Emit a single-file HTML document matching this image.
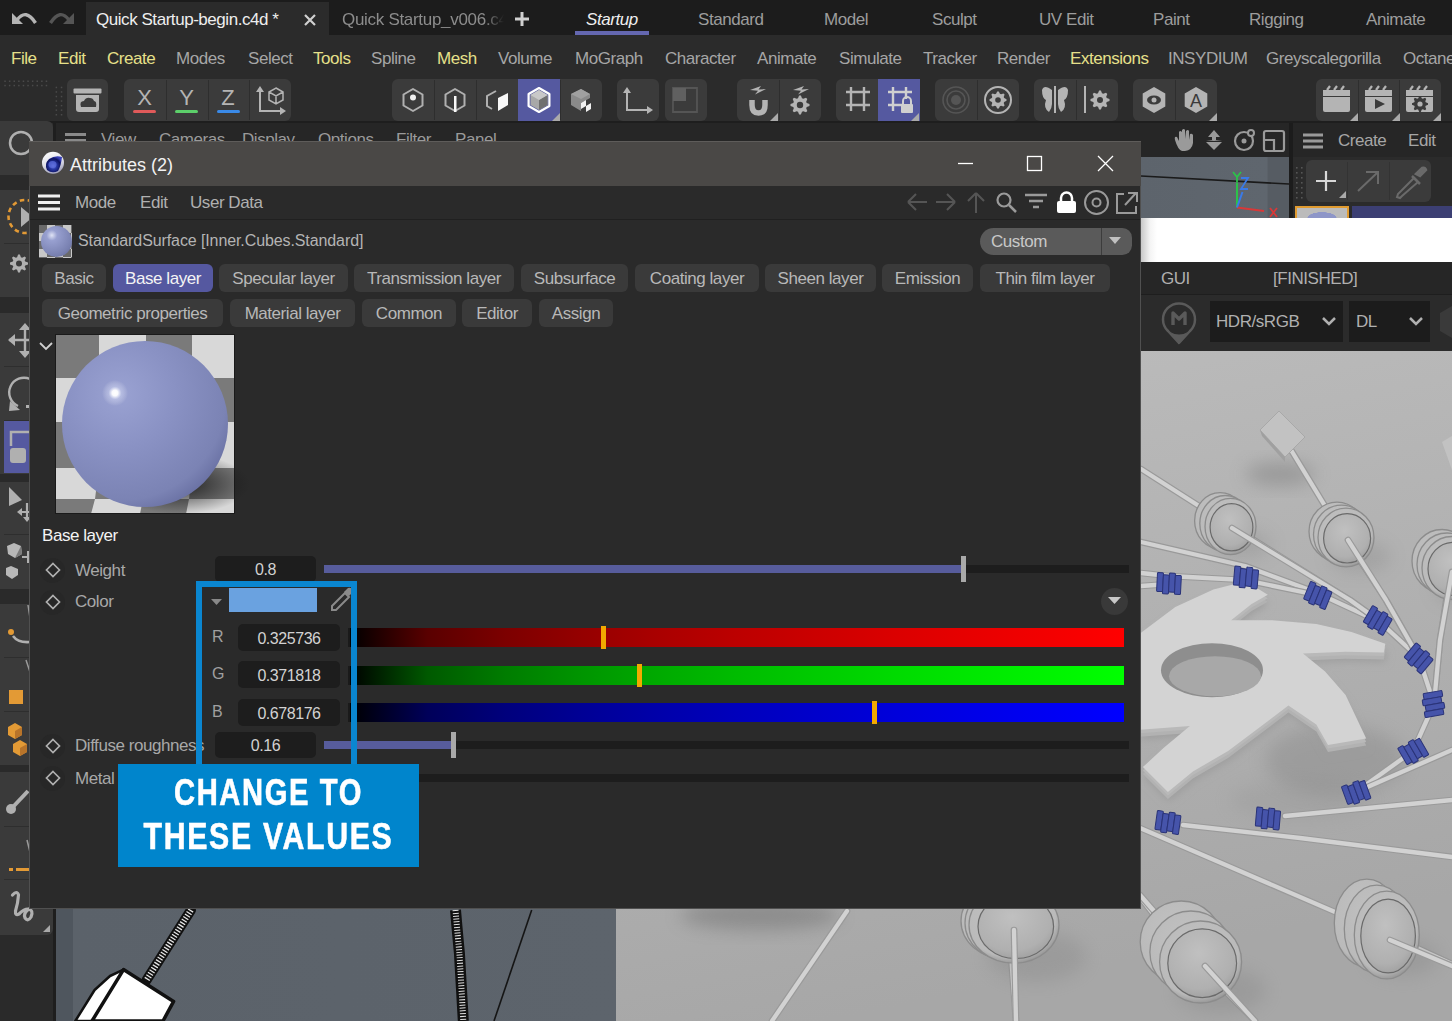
<!DOCTYPE html><html><head><meta charset="utf-8"><style>
html,body{margin:0;padding:0;}
body{width:1452px;height:1021px;overflow:hidden;position:relative;background:#232323;font-family:"Liberation Sans",sans-serif;}
.t{position:absolute;white-space:nowrap;line-height:1;letter-spacing:-0.45px;}
.b{position:absolute;}
svg{position:absolute;overflow:visible;}
</style></head><body>

<div class="b" style="left:0px;top:0px;width:1452px;height:35px;background:#1c1c1c;"></div>
<div class="b" style="left:86px;top:2px;width:243px;height:33px;background:#2b2b2b;"></div>
<svg style="left:0;top:0" width="100" height="35">
<path d="M12 13 L12 24 L23 24 Z" fill="#b4b4b4"/>
<path d="M17 20 Q26 8 35.5 23" stroke="#b4b4b4" stroke-width="3.4" fill="none"/>
<path d="M74 13 L74 24 L63 24 Z" fill="#555"/>
<path d="M69 20 Q60 8 50.5 23" stroke="#555" stroke-width="3.4" fill="none"/>
</svg>
<div class="t" style="left:96px;top:11px;font-size:17px;color:#eeeeee;">Quick Startup-begin.c4d *</div>
<svg style="left:300;top:10" width="20" height="20"><path d="M5 5 L15 15 M15 5 L5 15" stroke="#d0d0d0" stroke-width="2.2"/></svg>
<div class="t" style="left:342px;top:11px;font-size:17px;color:#8c8c8c;width:162px;overflow:hidden;letter-spacing:-0.3px;-webkit-mask-image:linear-gradient(90deg,#000 88%,transparent)">Quick Startup_v006.c4d</div>
<svg style="left:512;top:9" width="20" height="20"><path d="M10 3 L10 17 M3 10 L17 10" stroke="#d0d0d0" stroke-width="3"/></svg>
<div class="t" style="left:586px;top:11px;font-size:17px;color:#eeeeee;font-style:italic">Startup</div>
<div class="b" style="left:575px;top:31px;width:74px;height:4px;background:#6467b0;"></div>
<div class="t" style="left:698px;top:11px;font-size:17px;color:#9d9d9d;">Standard</div>
<div class="t" style="left:824px;top:11px;font-size:17px;color:#9d9d9d;">Model</div>
<div class="t" style="left:932px;top:11px;font-size:17px;color:#9d9d9d;">Sculpt</div>
<div class="t" style="left:1039px;top:11px;font-size:17px;color:#9d9d9d;">UV Edit</div>
<div class="t" style="left:1153px;top:11px;font-size:17px;color:#9d9d9d;">Paint</div>
<div class="t" style="left:1249px;top:11px;font-size:17px;color:#9d9d9d;">Rigging</div>
<div class="t" style="left:1366px;top:11px;font-size:17px;color:#9d9d9d;">Animate</div>
<div class="b" style="left:0px;top:35px;width:1452px;height:43px;background:#2b2b2b;"></div>
<div class="t" style="left:11px;top:50px;font-size:17px;color:#e6e08a;">File</div>
<div class="t" style="left:58px;top:50px;font-size:17px;color:#e6e08a;">Edit</div>
<div class="t" style="left:107px;top:50px;font-size:17px;color:#e6e08a;">Create</div>
<div class="t" style="left:176px;top:50px;font-size:17px;color:#a6a6a6;">Modes</div>
<div class="t" style="left:248px;top:50px;font-size:17px;color:#a6a6a6;">Select</div>
<div class="t" style="left:313px;top:50px;font-size:17px;color:#e6e08a;">Tools</div>
<div class="t" style="left:371px;top:50px;font-size:17px;color:#a6a6a6;">Spline</div>
<div class="t" style="left:437px;top:50px;font-size:17px;color:#e6e08a;">Mesh</div>
<div class="t" style="left:498px;top:50px;font-size:17px;color:#a6a6a6;">Volume</div>
<div class="t" style="left:575px;top:50px;font-size:17px;color:#a6a6a6;">MoGraph</div>
<div class="t" style="left:665px;top:50px;font-size:17px;color:#a6a6a6;">Character</div>
<div class="t" style="left:757px;top:50px;font-size:17px;color:#a6a6a6;">Animate</div>
<div class="t" style="left:839px;top:50px;font-size:17px;color:#a6a6a6;">Simulate</div>
<div class="t" style="left:923px;top:50px;font-size:17px;color:#a6a6a6;">Tracker</div>
<div class="t" style="left:997px;top:50px;font-size:17px;color:#a6a6a6;">Render</div>
<div class="t" style="left:1070px;top:50px;font-size:17px;color:#e6e08a;">Extensions</div>
<div class="t" style="left:1168px;top:50px;font-size:17px;color:#a6a6a6;">INSYDIUM</div>
<div class="t" style="left:1266px;top:50px;font-size:17px;color:#a6a6a6;">Greyscalegorilla</div>
<div class="t" style="left:1403px;top:50px;font-size:17px;color:#a6a6a6;">Octane</div>
<div class="b" style="left:0px;top:78px;width:1452px;height:44px;background:#2b2b2b;"></div>
<svg style="left:0;top:78px" width="70" height="44"><rect x="4.3" y="2.5" width="1.5" height="1.5" fill="#4a4a4a"/><rect x="4.3" y="6.8" width="1.5" height="1.5" fill="#4a4a4a"/><rect x="8.9" y="2.5" width="1.5" height="1.5" fill="#4a4a4a"/><rect x="8.9" y="6.8" width="1.5" height="1.5" fill="#4a4a4a"/><rect x="13.5" y="2.5" width="1.5" height="1.5" fill="#4a4a4a"/><rect x="13.5" y="6.8" width="1.5" height="1.5" fill="#4a4a4a"/><rect x="18.1" y="2.5" width="1.5" height="1.5" fill="#4a4a4a"/><rect x="18.1" y="6.8" width="1.5" height="1.5" fill="#4a4a4a"/><rect x="22.7" y="2.5" width="1.5" height="1.5" fill="#4a4a4a"/><rect x="22.7" y="6.8" width="1.5" height="1.5" fill="#4a4a4a"/><rect x="27.3" y="2.5" width="1.5" height="1.5" fill="#4a4a4a"/><rect x="27.3" y="6.8" width="1.5" height="1.5" fill="#4a4a4a"/><rect x="31.9" y="2.5" width="1.5" height="1.5" fill="#4a4a4a"/><rect x="31.9" y="6.8" width="1.5" height="1.5" fill="#4a4a4a"/><rect x="36.5" y="2.5" width="1.5" height="1.5" fill="#4a4a4a"/><rect x="36.5" y="6.8" width="1.5" height="1.5" fill="#4a4a4a"/><rect x="41.1" y="2.5" width="1.5" height="1.5" fill="#4a4a4a"/><rect x="41.1" y="6.8" width="1.5" height="1.5" fill="#4a4a4a"/><rect x="45.7" y="2.5" width="1.5" height="1.5" fill="#4a4a4a"/><rect x="45.7" y="6.8" width="1.5" height="1.5" fill="#4a4a4a"/><rect x="55.6" y="8.7" width="1.5" height="1.5" fill="#4a4a4a"/><rect x="60.8" y="8.7" width="1.5" height="1.5" fill="#4a4a4a"/><rect x="55.6" y="13.2" width="1.5" height="1.5" fill="#4a4a4a"/><rect x="60.8" y="13.2" width="1.5" height="1.5" fill="#4a4a4a"/><rect x="55.6" y="17.8" width="1.5" height="1.5" fill="#4a4a4a"/><rect x="60.8" y="17.8" width="1.5" height="1.5" fill="#4a4a4a"/><rect x="55.6" y="22.3" width="1.5" height="1.5" fill="#4a4a4a"/><rect x="60.8" y="22.3" width="1.5" height="1.5" fill="#4a4a4a"/><rect x="55.6" y="26.9" width="1.5" height="1.5" fill="#4a4a4a"/><rect x="60.8" y="26.9" width="1.5" height="1.5" fill="#4a4a4a"/><rect x="55.6" y="31.4" width="1.5" height="1.5" fill="#4a4a4a"/><rect x="60.8" y="31.4" width="1.5" height="1.5" fill="#4a4a4a"/><rect x="55.6" y="36.0" width="1.5" height="1.5" fill="#4a4a4a"/><rect x="60.8" y="36.0" width="1.5" height="1.5" fill="#4a4a4a"/></svg>
<div class="b" style="left:67px;top:79px;width:41px;height:42px;background:#3b3b3b;border-radius:6px"></div>
<div class="b" style="left:124px;top:79px;width:167px;height:42px;background:#3b3b3b;border-radius:6px"></div><div class="b" style="left:166px;top:80px;width:1px;height:40px;background:#2e2e2e;"></div><div class="b" style="left:208px;top:80px;width:1px;height:40px;background:#2e2e2e;"></div><div class="b" style="left:249px;top:80px;width:1px;height:40px;background:#2e2e2e;"></div>
<div class="b" style="left:392px;top:79px;width:210px;height:42px;background:#3b3b3b;border-radius:6px"></div><div class="b" style="left:434px;top:80px;width:1px;height:40px;background:#2e2e2e;"></div><div class="b" style="left:476px;top:80px;width:1px;height:40px;background:#2e2e2e;"></div><div class="b" style="left:518px;top:80px;width:1px;height:40px;background:#2e2e2e;"></div><div class="b" style="left:560px;top:80px;width:1px;height:40px;background:#2e2e2e;"></div><div class="b" style="left:518px;top:79px;width:42px;height:42px;background:#5559a0;border-radius:0"></div>
<div class="b" style="left:617px;top:79px;width:42px;height:42px;background:#3b3b3b;border-radius:6px"></div>
<div class="b" style="left:665px;top:79px;width:42px;height:42px;background:#3b3b3b;border-radius:6px"></div>
<div class="b" style="left:737px;top:79px;width:84px;height:42px;background:#3b3b3b;border-radius:6px"></div><div class="b" style="left:779px;top:80px;width:1px;height:40px;background:#2e2e2e;"></div>
<div class="b" style="left:836px;top:79px;width:83px;height:42px;background:#3b3b3b;border-radius:6px"></div><div class="b" style="left:878px;top:80px;width:1px;height:40px;background:#2e2e2e;"></div><div class="b" style="left:878px;top:79px;width:42px;height:42px;background:#5559a0;border-radius:0"></div>
<div class="b" style="left:935px;top:79px;width:84px;height:42px;background:#3b3b3b;border-radius:6px"></div><div class="b" style="left:977px;top:80px;width:1px;height:40px;background:#2e2e2e;"></div>
<div class="b" style="left:1034px;top:79px;width:84px;height:42px;background:#3b3b3b;border-radius:6px"></div><div class="b" style="left:1076px;top:80px;width:1px;height:40px;background:#2e2e2e;"></div>
<div class="b" style="left:1133px;top:79px;width:84px;height:42px;background:#3b3b3b;border-radius:6px"></div><div class="b" style="left:1175px;top:80px;width:1px;height:40px;background:#2e2e2e;"></div>
<div class="b" style="left:1316px;top:79px;width:125px;height:42px;background:#3b3b3b;border-radius:6px"></div><div class="b" style="left:1358px;top:80px;width:1px;height:40px;background:#2e2e2e;"></div><div class="b" style="left:1399px;top:80px;width:1px;height:40px;background:#2e2e2e;"></div>
<div class="b" style="left:0px;top:121px;width:1452px;height:2px;background:#1e1e1e;"></div>
<svg style="left:0;top:0" width="1452" height="125"><rect x="73.5" y="88.5" width="28" height="5" rx="1" fill="#b4b4b4"/><path d="M76 95 H99 V109 Q99 112 96 112 H79 Q76 112 76 109 Z" fill="#b4b4b4"/><path d="M81 107 Q79 101 84 101 Q86 97 90 98 Q93 98 94 101 Q97 101 96 107 Z" fill="#3b3b3b"/><text x="144.5" y="105" font-family="Liberation Sans" font-size="22" fill="#b4b4b4" text-anchor="middle">X</text><rect x="133" y="110" width="23" height="3" rx="1.5" fill="#e05a5a"/><text x="186.5" y="105" font-family="Liberation Sans" font-size="22" fill="#b4b4b4" text-anchor="middle">Y</text><rect x="175" y="110" width="23" height="3" rx="1.5" fill="#5ccf6a"/><text x="228" y="105" font-family="Liberation Sans" font-size="22" fill="#b4b4b4" text-anchor="middle">Z</text><rect x="217" y="110" width="23" height="3" rx="1.5" fill="#3a8ae8"/><path d="M260 90 V111 H282" stroke="#b4b4b4" stroke-width="2" fill="none"/><path d="M256 92 L260 86 L264 92 Z M280 107 L286 111 L280 115 Z" fill="#b4b4b4"/><path d="M276 88 L283 92 L283 100 L276 104 L269 100 L269 92 Z M269 92 L276 96 L283 92 M276 96 V104" stroke="#b4b4b4" stroke-width="1.5" fill="none"/><path d="M413.0 111.0 L403.5 105.5 L403.5 94.5 L413.0 89.0 L422.5 94.5 L422.5 105.5 Z" stroke="#b0b0b0" stroke-width="2" fill="none" stroke-linejoin="round"/><circle cx="413" cy="97.5" r="3" fill="#f0f0f0"/><path d="M455.0 111.0 L445.5 105.5 L445.5 94.5 L455.0 89.0 L464.5 94.5 L464.5 105.5 Z" stroke="#b0b0b0" stroke-width="2" fill="none" stroke-linejoin="round"/><rect x="454" y="96" width="2.5" height="16" fill="#f8f8f8"/><path d="M496 91 L487 96 V106 L492 109" stroke="#b0b0b0" stroke-width="2" fill="none"/><path d="M498 98 L508 93 V105 L498 111 Z" fill="#f8f8f8"/><path d="M539.0 112.0 L528.6 106.0 L528.6 94.0 L539.0 88.0 L549.4 94.0 L549.4 106.0 Z" stroke="#ffffff" stroke-width="2.2" fill="none" stroke-linejoin="round"/><path d="M539 90 L547.5 95 V105 L539 110 L530.5 105 V95 Z" fill="#a8a8a8"/><path d="M539 100 L547.5 95 V105 L539 110 Z" fill="#707070"/><path d="M539 100 L530.5 95 L539 90 L547.5 95 Z" fill="#c8c8c8"/><path d="M560 121 L552 121 L560 113 Z" fill="#aaaaaa"/><path d="M581 89 L590 94 V98 L581 103 V111 L571 105 V94 Z" fill="#8a8a8a"/><path d="M581 89 L590 94 L581 99 L571 94 Z" fill="#a0a0a0"/><path d="M581 103 L586 100 V106 L581 109 Z M586 106 L591 103 V109 L586 112 Z" fill="#f0f0f0"/><path d="M627 90 V110 H650" stroke="#b4b4b4" stroke-width="2" fill="none"/><path d="M623 93 L627 87 L631 93 Z M647 106 L653 110 L647 114 Z" fill="#b4b4b4"/><path d="M673 88 H697 V112 H673 Z" stroke="#555" stroke-width="1.8" fill="none"/><rect x="673" y="88" width="13" height="13" fill="#606060"/><path d="M752 96 V105 Q752 113 758.5 113 Q765 113 765 105 V96" stroke="#b4b4b4" stroke-width="5.5" fill="none"/><rect x="749" y="96" width="6" height="4" fill="#3b3b3b"/><rect x="762" y="96" width="6" height="4" fill="#3b3b3b"/><path d="M750 90 L761 86 L758.5 89.5 L766 89 L755 94.5 L758 90.8 Z" fill="#b4b4b4"/><path d="M778 121 L770 121 L778 113 Z" fill="#aaa"/><path d="M809.5 104.1 L809.5 105.9 L806.7 107.0 L806.2 108.3 L807.3 111.0 L806.0 112.3 L803.3 111.2 L802.0 111.7 L800.9 114.5 L799.1 114.5 L798.0 111.7 L796.7 111.2 L794.0 112.3 L792.7 111.0 L793.8 108.3 L793.3 107.0 L790.5 105.9 L790.5 104.1 L793.3 103.0 L793.8 101.7 L792.7 99.0 L794.0 97.7 L796.7 98.8 L798.0 98.3 L799.1 95.5 L800.9 95.5 L802.0 98.3 L803.3 98.8 L806.0 97.7 L807.3 99.0 L806.2 101.7 L806.7 103.0 Z" fill="#b4b4b4"/><circle cx="800" cy="105" r="3.2" fill="#3b3b3b"/><path d="M793 90 L804 86 L801.5 89.5 L809 89 L798 94.5 L801 90.8 Z" fill="#b4b4b4"/><path d="M846 92 H870 M846 105 H870 M851 87 V111 M864 87 V111" stroke="#b4b4b4" stroke-width="2.4"/><path d="M888 92 H912 M888 105 H902 M893 87 V111 M906 87 V99" stroke="#d0d0d0" stroke-width="2.4"/><rect x="901" y="104" width="12" height="9" rx="1" fill="#d0d0d0"/><path d="M903 104 V101 A4 4 0 0 1 911 101 V104" stroke="#d0d0d0" stroke-width="2" fill="none"/><path d="M919 121 L911 121 L919 113 Z" fill="#aaa"/><circle cx="956" cy="100" r="13" stroke="#555" stroke-width="1.6" fill="none"/><circle cx="956" cy="100" r="9" stroke="#555" stroke-width="1.6" fill="none"/><circle cx="956" cy="100" r="5" fill="#555"/><circle cx="998" cy="100" r="13" stroke="#b4b4b4" stroke-width="2" fill="none"/><path d="M1006.5 99.2 L1006.5 100.8 L1004.2 101.9 L1003.7 103.1 L1004.6 105.4 L1003.4 106.6 L1001.1 105.7 L999.9 106.2 L998.8 108.5 L997.2 108.5 L996.1 106.2 L994.9 105.7 L992.6 106.6 L991.4 105.4 L992.3 103.1 L991.8 101.9 L989.5 100.8 L989.5 99.2 L991.8 98.1 L992.3 96.9 L991.4 94.6 L992.6 93.4 L994.9 94.3 L996.1 93.8 L997.2 91.5 L998.8 91.5 L999.9 93.8 L1001.1 94.3 L1003.4 93.4 L1004.6 94.6 L1003.7 96.9 L1004.2 98.1 Z" fill="#b4b4b4"/><circle cx="998" cy="100" r="2.8" fill="#3b3b3b"/><rect x="1054" y="86" width="2" height="27" fill="#b4b4b4"/><path d="M1052 90 Q1044 84 1042 90 Q1042 98 1046 100 Q1043 108 1049 112 Q1052 108 1052 104 Z" fill="#b4b4b4"/><path d="M1058 90 Q1066 84 1068 90 Q1068 98 1064 100 Q1067 108 1061 112 Q1058 108 1058 104 Z" fill="#b4b4b4"/><rect x="1084" y="86" width="2" height="27" fill="#b4b4b4"/><path d="M1109.5 99.1 L1109.5 100.9 L1106.7 102.0 L1106.2 103.3 L1107.3 106.0 L1106.0 107.3 L1103.3 106.2 L1102.0 106.7 L1100.9 109.5 L1099.1 109.5 L1098.0 106.7 L1096.7 106.2 L1094.0 107.3 L1092.7 106.0 L1093.8 103.3 L1093.3 102.0 L1090.5 100.9 L1090.5 99.1 L1093.3 98.0 L1093.8 96.7 L1092.7 94.0 L1094.0 92.7 L1096.7 93.8 L1098.0 93.3 L1099.1 90.5 L1100.9 90.5 L1102.0 93.3 L1103.3 93.8 L1106.0 92.7 L1107.3 94.0 L1106.2 96.7 L1106.7 98.0 Z" fill="#b4b4b4"/><circle cx="1100" cy="100" r="3" fill="#3b3b3b"/><path d="M1154.0 113.0 L1142.7 106.5 L1142.7 93.5 L1154.0 87.0 L1165.3 93.5 L1165.3 106.5 Z" stroke="none" stroke-width="0" fill="#b4b4b4" stroke-linejoin="round"/><ellipse cx="1154" cy="100" rx="7" ry="4.5" fill="#3b3b3b"/><circle cx="1154" cy="100" r="2.5" fill="#b4b4b4"/><path d="M1196.0 113.0 L1184.7 106.5 L1184.7 93.5 L1196.0 87.0 L1207.3 93.5 L1207.3 106.5 Z" stroke="none" stroke-width="0" fill="#b4b4b4" stroke-linejoin="round"/><text x="1196" y="107" font-family="Liberation Sans" font-size="18" fill="#3b3b3b" text-anchor="middle">A</text><path d="M1217 121 L1209 121 L1217 113 Z" fill="#aaa"/><path d="M1323 90 H1350 V96 H1323 Z" fill="#b4b4b4"/><path d="M1327 90 L1330 86 M1334 90 L1337 86 M1341 90 L1344 86" stroke="#b4b4b4" stroke-width="2.2"/><path d="M1323 97 H1350 V110 Q1350 112 1348 112 H1325 Q1323 112 1323 110 Z" fill="#b4b4b4"/><path d="M1358 121 L1350 121 L1358 113 Z" fill="#aaa"/><path d="M1365 90 H1392 V96 H1365 Z" fill="#b4b4b4"/><path d="M1369 90 L1372 86 M1376 90 L1379 86 M1383 90 L1386 86" stroke="#b4b4b4" stroke-width="2.2"/><path d="M1365 97 H1392 V110 Q1392 112 1390 112 H1367 Q1365 112 1365 110 Z" fill="#b4b4b4"/><path d="M1400 121 L1392 121 L1400 113 Z" fill="#aaa"/><path d="M1406 90 H1433 V96 H1406 Z" fill="#b4b4b4"/><path d="M1410 90 L1413 86 M1417 90 L1420 86 M1424 90 L1427 86" stroke="#b4b4b4" stroke-width="2.2"/><path d="M1406 97 H1433 V110 Q1433 112 1431 112 H1408 Q1406 112 1406 110 Z" fill="#b4b4b4"/><path d="M1441 121 L1433 121 L1441 113 Z" fill="#aaa"/><path d="M1375 99 L1385 104 L1375 109 Z" fill="#3b3b3b"/><path d="M1428.0 103.2 L1428.0 104.8 L1425.7 105.7 L1425.3 106.8 L1426.2 109.1 L1425.1 110.2 L1422.8 109.3 L1421.7 109.7 L1420.8 112.0 L1419.2 112.0 L1418.3 109.7 L1417.2 109.3 L1414.9 110.2 L1413.8 109.1 L1414.7 106.8 L1414.3 105.7 L1412.0 104.8 L1412.0 103.2 L1414.3 102.3 L1414.7 101.2 L1413.8 98.9 L1414.9 97.8 L1417.2 98.7 L1418.3 98.3 L1419.2 96.0 L1420.8 96.0 L1421.7 98.3 L1422.8 98.7 L1425.1 97.8 L1426.2 98.9 L1425.3 101.2 L1425.7 102.3 Z" fill="#3b3b3b"/><circle cx="1420" cy="104" r="2.6" fill="#b4b4b4"/></svg>
<div class="b" style="left:0px;top:123px;width:56px;height:900px;background:#2a2a2a;"></div>
<div class="b" style="left:53px;top:121px;width:3px;height:900px;background:#1e1e1e;"></div>
<div class="b" style="left:0px;top:121px;width:53px;height:54px;background:#3a3a3a;border-radius:0 6px 6px 0"></div>
<div class="b" style="left:0px;top:190px;width:53px;height:107px;background:#3a3a3a;border-radius:0 6px 6px 0"></div>
<div class="b" style="left:4px;top:243px;width:49px;height:1px;background:#2e2e2e;"></div>
<div class="b" style="left:0px;top:313px;width:53px;height:161px;background:#3a3a3a;border-radius:0 6px 6px 0"></div>
<div class="b" style="left:4px;top:366px;width:49px;height:1px;background:#2e2e2e;"></div>
<div class="b" style="left:4px;top:420px;width:49px;height:1px;background:#2e2e2e;"></div>
<div class="b" style="left:0px;top:482px;width:53px;height:107px;background:#3a3a3a;border-radius:0 6px 6px 0"></div>
<div class="b" style="left:4px;top:534px;width:49px;height:1px;background:#2e2e2e;"></div>
<div class="b" style="left:0px;top:604px;width:53px;height:161px;background:#3a3a3a;border-radius:0 6px 6px 0"></div>
<div class="b" style="left:4px;top:657px;width:49px;height:1px;background:#2e2e2e;"></div>
<div class="b" style="left:4px;top:711px;width:49px;height:1px;background:#2e2e2e;"></div>
<div class="b" style="left:0px;top:772px;width:53px;height:163px;background:#3a3a3a;border-radius:0 6px 6px 0"></div>
<div class="b" style="left:4px;top:826px;width:49px;height:1px;background:#2e2e2e;"></div>
<div class="b" style="left:4px;top:879px;width:49px;height:1px;background:#2e2e2e;"></div>
<div class="b" style="left:4px;top:421px;width:49px;height:52px;background:#5559a0;"></div>
<svg style="left:0;top:0" width="56" height="1021"><circle cx="21" cy="143" r="11" stroke="#b0b0b0" stroke-width="2.5" fill="none"/><circle cx="25" cy="216.5" r="16.5" stroke="#e39a35" stroke-width="2.6" fill="none" stroke-dasharray="4.5 3.5"/><path d="M21 207 L33 217 L21 227 Z" fill="#b0b0b0"/><path d="M28.0 262.6 L28.0 264.4 L25.2 265.4 L24.7 266.6 L26.0 269.2 L24.7 270.5 L22.1 269.2 L20.9 269.7 L19.9 272.5 L18.1 272.5 L17.1 269.7 L15.9 269.2 L13.3 270.5 L12.0 269.2 L13.3 266.6 L12.8 265.4 L10.0 264.4 L10.0 262.6 L12.8 261.6 L13.3 260.4 L12.0 257.8 L13.3 256.5 L15.9 257.8 L17.1 257.3 L18.1 254.5 L19.9 254.5 L20.9 257.3 L22.1 257.8 L24.7 256.5 L26.0 257.8 L24.7 260.4 L25.2 261.6 Z" fill="#b0b0b0"/><circle cx="19" cy="263.5" r="3" fill="#3a3a3a"/><path d="M9 340 H40 M25 325 V356" stroke="#b0b0b0" stroke-width="2.4"/><path d="M8 340 L15 334 V346 Z M25 323 L19 330 H31 Z M25 358 L19 351 H31 Z" fill="#b0b0b0"/><path d="M30 379 A14 14 0 1 0 18 406" stroke="#b0b0b0" stroke-width="2.4" fill="none"/><path d="M10 401 L20 410 L9 411 Z" fill="#b0b0b0"/><rect x="26" y="405" width="4" height="3" fill="#b0b0b0"/><path d="M11 446 V432 H30" stroke="#b0b0b0" stroke-width="2.5" fill="none"/><rect x="10" y="448" width="16" height="15" rx="3" fill="#b0b0b0"/><path d="M9 487 L22 500 L9 506 Z" fill="#b0b0b0"/><path d="M19 512 H34 M27 503 V520" stroke="#b0b0b0" stroke-width="2.2"/><path d="M17 512 L22 508 V516 Z M27 522 L23 517 H31 Z" fill="#b0b0b0"/><path d="M14 543 L21 546 L22 554 L15 558 L8 554 L7 546 Z" fill="#b8b8b8"/><path d="M15 558 L22 554 L21 546 Z" fill="#7a7a7a"/><path d="M11 566 L18 569 L18 575 L12 579 L6 575 L6 568 Z" fill="#b8b8b8"/><path d="M22 557 H34 M28 551 V563" stroke="#b0b0b0" stroke-width="2"/><path d="M13 636 Q18 643 30 642" stroke="#b0b0b0" stroke-width="2.5" fill="none"/><circle cx="11" cy="632" r="3" fill="#e39a35"/><path d="M28 605 L30 618" stroke="#9a9a9a" stroke-width="1.5"/><rect x="9" y="690" width="14" height="14" fill="#e39a35"/><path d="M26 660 L30 672" stroke="#9a9a9a" stroke-width="1.5"/><path d="M8 727 L15 723 L22 727 V735 L15 739 L8 735 Z" fill="#e39a35"/><path d="M15 731 V739 L22 735 V727 Z" fill="#b8742a"/><path d="M13 744 L20 740 L27 744 V752 L20 756 L13 752 Z" fill="#e39a35"/><path d="M20 748 V756 L27 752 V744 Z" fill="#b8742a"/><path d="M12 808 L28 791" stroke="#b0b0b0" stroke-width="4"/><circle cx="11" cy="809" r="5" fill="#b0b0b0"/><rect x="9" y="868" width="4" height="3" fill="#e39a35"/><rect x="16" y="868" width="14" height="3" fill="#e39a35"/><path d="M27 840 L30 852" stroke="#9a9a9a" stroke-width="1.5"/><path d="M12.5 895 Q17 890 18.5 895 Q18 903 15.5 911 Q15 916 19 914 Q24 909 28 909 Q34 910 31 917 Q28 922 25 918 Q23 913 29 909" stroke="#b0b0b0" stroke-width="3.2" fill="none" stroke-linecap="round"/><path d="M50 932 L43 932 L50 925 Z" fill="#a8a8a8"/></svg>
<div class="b" style="left:56px;top:123px;width:1233px;height:34px;background:#262626;"></div>
<div class="b" style="left:1293px;top:123px;width:159px;height:34px;background:#262626;"></div>
<div class="b" style="left:1289px;top:123px;width:4px;height:95px;background:#1c1c1c;"></div>
<svg style="left:64px;top:131px" width="24" height="18"><path d="M1 3.5 H22 M1 9.5 H22 M1 15.5 H22" stroke="#8a8a8a" stroke-width="3"/></svg>
<div class="t" style="left:101px;top:131px;font-size:17px;color:#9a9a9a;">View</div>
<div class="t" style="left:159px;top:131px;font-size:17px;color:#9a9a9a;">Cameras</div>
<div class="t" style="left:242px;top:131px;font-size:17px;color:#9a9a9a;">Display</div>
<div class="t" style="left:318px;top:131px;font-size:17px;color:#9a9a9a;">Options</div>
<div class="t" style="left:396px;top:131px;font-size:17px;color:#9a9a9a;">Filter</div>
<div class="t" style="left:455px;top:131px;font-size:17px;color:#9a9a9a;">Panel</div>
<svg style="left:1170;top:128" width="120" height="26">
<path d="M5 12 Q4 8 7 9 L9 13 L9 4 Q10 2 12 4 L12 11 L12 2 Q14 0 15 2 L15 11 L16 3 Q18 1 19 3 L19 12 L20 6 Q22 5 23 7 L23 15 Q22 22 15 23 L12 23 Q8 22 5 12 Z" fill="#9a9a9a"/>
<path d="M44 2 L38 9 L42 9 L42 12 L36 12 L44 13 L52 12 L46 12 L46 9 L50 9 Z M36 14 L44 22 L52 14 Z" fill="#9a9a9a"/>
<circle cx="74" cy="13" r="9" stroke="#9a9a9a" stroke-width="2.2" fill="none"/><circle cx="74" cy="13" r="2.5" fill="#9a9a9a"/><circle cx="81" cy="5" r="3" fill="#262626" stroke="#9a9a9a" stroke-width="2"/>
<rect x="94" y="3" width="20" height="20" rx="2" stroke="#9a9a9a" stroke-width="2.2" fill="none"/><path d="M94 12 H104 V23" stroke="#9a9a9a" stroke-width="2.2" fill="none"/>
</svg>
<svg style="left:1302;top:133" width="22" height="16"><path d="M1 2 H21 M1 8 H21 M1 14 H21" stroke="#9a9a9a" stroke-width="3"/></svg>
<div class="t" style="left:1338px;top:132px;font-size:17px;color:#a6a6a6;">Create</div>
<div class="t" style="left:1408px;top:132px;font-size:17px;color:#a6a6a6;">Edit</div>
<div class="b" style="left:1141px;top:157px;width:148px;height:61px;background:linear-gradient(90deg,#5d646c 0%,#5f666e 85%,#565c63 86%,#565c63 100%);"></div>
<svg style="left:1141;top:157" width="148" height="61">
<path d="M0 19 L148 27" stroke="#1a1a1a" stroke-width="1.6"/>
<path d="M96 25.5 V50.5" stroke="#2cc24a" stroke-width="2"/>
<path d="M92 15 L96 20 L100 15 M96 20 V25" stroke="#2cc24a" stroke-width="1.8" fill="none"/>
<path d="M96 50.5 L123 54" stroke="#d83838" stroke-width="2"/>
<path d="M129 51 L136 60 M136 51 L129 60" stroke="#d83838" stroke-width="1.8"/>
<path d="M96 50.5 L101.5 35" stroke="#3a7ae8" stroke-width="2"/>
<path d="M100 21 H107 L100 32 H107" stroke="#3a7ae8" stroke-width="1.8" fill="none"/>
</svg>
<div class="b" style="left:1293px;top:157px;width:159px;height:48px;background:#2b2b2b;"></div>
<div class="b" style="left:1306px;top:160px;width:125px;height:42px;background:#3b3b3b;border-radius:6px"></div>
<div class="b" style="left:1347px;top:162px;width:1px;height:38px;background:#333;"></div>
<div class="b" style="left:1389px;top:162px;width:1px;height:38px;background:#333;"></div>
<svg style="left:1306;top:160" width="125" height="42">
<path d="M20 11 V31 M10 21 H30" stroke="#d8d8d8" stroke-width="2.2"/>
<path d="M33 38 L40 31 L40 38 Z" fill="#aaa"/>
<path d="M52 31 L72 12 M60 12 H72 V24" stroke="#6a6a6a" stroke-width="2" fill="none"/>
<path d="M96 36 L94 38 L91 37 L92 34 L108 18 L112 22 Z" stroke="#6a6a6a" stroke-width="2" fill="none"/><path d="M106 16 L114 24 M110 14 L116 8 Q119 7 120 10 L114 16 Z" stroke="#6a6a6a" stroke-width="2.5" fill="#6a6a6a"/>
</svg>
<div class="b" style="left:1293px;top:205px;width:159px;height:13px;background:#2b2b2b;"></div>
<svg style="left:1293px;top:160px" width="12" height="40"><rect x="3" y="7" width="1.6" height="1.6" fill="#555"/><rect x="3" y="12" width="1.6" height="1.6" fill="#555"/><rect x="3" y="17" width="1.6" height="1.6" fill="#555"/><rect x="3" y="22" width="1.6" height="1.6" fill="#555"/><rect x="3" y="27" width="1.6" height="1.6" fill="#555"/><rect x="3" y="32" width="1.6" height="1.6" fill="#555"/><rect x="3" y="37" width="1.6" height="1.6" fill="#555"/><rect x="8" y="7" width="1.6" height="1.6" fill="#555"/><rect x="8" y="12" width="1.6" height="1.6" fill="#555"/><rect x="8" y="17" width="1.6" height="1.6" fill="#555"/><rect x="8" y="22" width="1.6" height="1.6" fill="#555"/><rect x="8" y="27" width="1.6" height="1.6" fill="#555"/><rect x="8" y="32" width="1.6" height="1.6" fill="#555"/><rect x="8" y="37" width="1.6" height="1.6" fill="#555"/></svg>
<div class="b" style="left:1295px;top:206px;width:54px;height:12px;background:#e09b30;"></div>
<div class="b" style="left:1297px;top:208px;width:50px;height:10px;background:radial-gradient(ellipse at 50% 100%,#8e96c8 40%,#bbb 42%);"></div>
<div class="b" style="left:1352px;top:206px;width:100px;height:12px;background:#3c3f73;"></div>
<div class="b" style="left:1141px;top:218px;width:311px;height:44px;background:linear-gradient(90deg,#c8c8c8 0px,#f4f4f4 9px,#ffffff 16px);"></div>
<div class="b" style="left:1141px;top:262px;width:311px;height:33px;background:#262626;"></div>
<div class="t" style="left:1161px;top:270px;font-size:17px;color:#b0b0b0;">GUI</div>
<div class="t" style="left:1273px;top:270px;font-size:17px;color:#b0b0b0;">[FINISHED]</div>
<div class="b" style="left:1141px;top:295px;width:311px;height:56px;background:#2b2b2b;"></div>
<svg style="left:1160;top:301" width="40" height="44">
<path d="M19 42 L8 30 A16 16 0 1 1 30 30 Z" stroke="#5a5a5a" stroke-width="2.5" fill="none" stroke-linejoin="round"/>
<path d="M10 31 L19 42 L28 31 Q19 36 10 31 Z" fill="#5a5a5a"/>
<path d="M13 24 V12 L19 18 L25 12 V24" stroke="#5a5a5a" stroke-width="3.4" fill="none" stroke-linejoin="round"/>
</svg>
<div class="b" style="left:1210px;top:301px;width:133px;height:41px;background:#1c1c1c;"></div>
<div class="t" style="left:1216px;top:313px;font-size:17px;color:#b0b0b0;">HDR/sRGB</div>
<svg style="left:1320;top:315" width="18" height="12"><path d="M3 3 L9 9 L15 3" stroke="#b0b0b0" stroke-width="2.5" fill="none"/></svg>
<div class="b" style="left:1349px;top:301px;width:81px;height:41px;background:#1c1c1c;"></div>
<div class="t" style="left:1356px;top:313px;font-size:17px;color:#b0b0b0;">DL</div>
<svg style="left:1407;top:315" width="18" height="12"><path d="M3 3 L9 9 L15 3" stroke="#b0b0b0" stroke-width="2.5" fill="none"/></svg>
<svg style="left:1438px;top:304px" width="14" height="36"><path d="M14 2 L2 9 V27 L14 34 Z" fill="#3a3a3a"/></svg>
<div class="b" style="left:1141px;top:294px;width:311px;height:1px;background:#1e1e1e;"></div>
<div class="b" style="left:56px;top:909px;width:560px;height:112px;background:linear-gradient(90deg,#4f565e 0px,#4f565e 17px,#5b626a 17px,#5d646c 100%);"></div>
<svg style="left:56px;top:909px" width="560" height="112">
<path d="M135 1 L90.6 71" stroke="#111" stroke-width="10" stroke-linecap="round"/>
<path d="M135 1 L90.6 71" stroke="#e8e8e8" stroke-width="6" stroke-dasharray="1.3 1.7"/>
<path d="M399.5 1 Q402 30 403.4 44 Q405 70 407.3 112" stroke="#111" stroke-width="11" fill="none"/>
<path d="M399.5 1 Q402 30 403.4 44 Q405 70 407.3 112" stroke="#e0e0e0" stroke-width="6" stroke-dasharray="1 1.8" fill="none"/>
<path d="M67.5 60.6 L54 67 L38.6 81 L19.3 112 L60 112 Z" fill="#fff" stroke="#111" stroke-width="2.5" stroke-linejoin="round"/>
<path d="M67.5 60.6 L117.6 92.4 L107 112 L36 112 Z" fill="#fff" stroke="#111" stroke-width="3.5" stroke-linejoin="round"/>
<path d="M475.7 1 L438 112" stroke="#151515" stroke-width="1.6"/>
</svg>
<svg style="left:616px;top:351px" width="836" height="670"><defs>
<linearGradient id="bg" x1="0" y1="0" x2="0.25" y2="1"><stop offset="0" stop-color="#bdbdbd"/><stop offset="0.45" stop-color="#b3b3b3"/><stop offset="1" stop-color="#a7a7a7"/></linearGradient>
<radialGradient id="sph" cx="0.45" cy="0.35" r="0.75"><stop offset="0" stop-color="#c0c0c0"/><stop offset="0.7" stop-color="#b0b0b0"/><stop offset="1" stop-color="#999"/></radialGradient>
<radialGradient id="ring" cx="0.45" cy="0.4" r="0.6"><stop offset="0" stop-color="#c2c2c2"/><stop offset="0.85" stop-color="#bababa"/><stop offset="1" stop-color="#9a9a9a"/></radialGradient>
<filter id="blur" x="-50%" y="-50%" width="200%" height="200%"><feGaussianBlur stdDeviation="9"/></filter><filter id="blur2" x="-20%" y="-20%" width="140%" height="140%"><feGaussianBlur stdDeviation="4"/></filter>
</defs><rect x="0" y="0" width="836" height="670" fill="url(#bg)"/><ellipse cx="664" cy="123" rx="35" ry="12" fill="#666" opacity="0.35" filter="url(#blur)"/><ellipse cx="144" cy="564" rx="80" ry="15" fill="#555" opacity="0.35" filter="url(#blur)"/><ellipse cx="684" cy="449" rx="70" ry="20" fill="#888" opacity="0.2" filter="url(#blur)"/><ellipse cx="719" cy="409" rx="70" ry="35" fill="#707070" opacity="0.25" filter="url(#blur)"/><path d="M525.0 118.0 L583.0 155.0" stroke="#9a9a9a" stroke-width="6.7" fill="none" stroke-linecap="round" stroke-linejoin="round"/><path d="M525.0 118.0 L583.0 155.0" stroke="#d2d2d2" stroke-width="4.3" fill="none" stroke-linecap="round" stroke-linejoin="round"/><path d="M669.0 89.0 L709.0 155.0" stroke="#9a9a9a" stroke-width="6.7" fill="none" stroke-linecap="round" stroke-linejoin="round"/><path d="M669.0 89.0 L709.0 155.0" stroke="#d2d2d2" stroke-width="4.3" fill="none" stroke-linecap="round" stroke-linejoin="round"/><path d="M525.0 191.0 L629.0 215.0 L699.0 241.0 L764.0 271.0 L803.0 307.0 L818.0 353.0 L797.0 400.0 L740.0 441.0" stroke="#9a9a9a" stroke-width="6.7" fill="none" stroke-linecap="round" stroke-linejoin="round"/><path d="M525.0 191.0 L629.0 215.0 L699.0 241.0 L764.0 271.0 L803.0 307.0 L818.0 353.0 L797.0 400.0 L740.0 441.0" stroke="#d2d2d2" stroke-width="4.3" fill="none" stroke-linecap="round" stroke-linejoin="round"/><path d="M625.0 181.0 L734.0 249.0 L762.0 269.0" stroke="#9a9a9a" stroke-width="6.7" fill="none" stroke-linecap="round" stroke-linejoin="round"/><path d="M625.0 181.0 L734.0 249.0 L762.0 269.0" stroke="#d2d2d2" stroke-width="4.3" fill="none" stroke-linecap="round" stroke-linejoin="round"/><path d="M734.0 194.0 L770.0 249.0 L803.0 307.0" stroke="#9a9a9a" stroke-width="6.7" fill="none" stroke-linecap="round" stroke-linejoin="round"/><path d="M734.0 194.0 L770.0 249.0 L803.0 307.0" stroke="#d2d2d2" stroke-width="4.3" fill="none" stroke-linecap="round" stroke-linejoin="round"/><path d="M834.0 226.0 L824.0 289.0 L818.0 353.0" stroke="#9a9a9a" stroke-width="6.7" fill="none" stroke-linecap="round" stroke-linejoin="round"/><path d="M834.0 226.0 L824.0 289.0 L818.0 353.0" stroke="#d2d2d2" stroke-width="4.3" fill="none" stroke-linecap="round" stroke-linejoin="round"/><path d="M525.0 222.0 L553.0 225.0 L629.0 229.0 L701.0 244.0" stroke="#9a9a9a" stroke-width="6.7" fill="none" stroke-linecap="round" stroke-linejoin="round"/><path d="M525.0 222.0 L553.0 225.0 L629.0 229.0 L701.0 244.0" stroke="#d2d2d2" stroke-width="4.3" fill="none" stroke-linecap="round" stroke-linejoin="round"/><path d="M525.0 235.0 L553.0 233.0" stroke="#9a9a9a" stroke-width="6.7" fill="none" stroke-linecap="round" stroke-linejoin="round"/><path d="M525.0 235.0 L553.0 233.0" stroke="#d2d2d2" stroke-width="4.3" fill="none" stroke-linecap="round" stroke-linejoin="round"/><path d="M567.0 474.0 L684.0 487.0 L836.0 506.0" stroke="#9a9a9a" stroke-width="6.7" fill="none" stroke-linecap="round" stroke-linejoin="round"/><path d="M567.0 474.0 L684.0 487.0 L836.0 506.0" stroke="#d2d2d2" stroke-width="4.3" fill="none" stroke-linecap="round" stroke-linejoin="round"/><path d="M524.0 477.0 L719.0 561.0" stroke="#9a9a9a" stroke-width="6.7" fill="none" stroke-linecap="round" stroke-linejoin="round"/><path d="M524.0 477.0 L719.0 561.0" stroke="#d2d2d2" stroke-width="4.3" fill="none" stroke-linecap="round" stroke-linejoin="round"/><path d="M669.0 465.0 L836.0 449.0" stroke="#9a9a9a" stroke-width="6.7" fill="none" stroke-linecap="round" stroke-linejoin="round"/><path d="M669.0 465.0 L836.0 449.0" stroke="#d2d2d2" stroke-width="4.3" fill="none" stroke-linecap="round" stroke-linejoin="round"/><path d="M740.0 441.0 L836.0 399.0" stroke="#9a9a9a" stroke-width="6.7" fill="none" stroke-linecap="round" stroke-linejoin="round"/><path d="M740.0 441.0 L836.0 399.0" stroke="#d2d2d2" stroke-width="4.3" fill="none" stroke-linecap="round" stroke-linejoin="round"/><path d="M799.0 596.0 L836.0 613.0" stroke="#9a9a9a" stroke-width="6.7" fill="none" stroke-linecap="round" stroke-linejoin="round"/><path d="M799.0 596.0 L836.0 613.0" stroke="#d2d2d2" stroke-width="4.3" fill="none" stroke-linecap="round" stroke-linejoin="round"/><path d="M524.0 546.0 L541.0 568.0" stroke="#9a9a9a" stroke-width="6.7" fill="none" stroke-linecap="round" stroke-linejoin="round"/><path d="M524.0 546.0 L541.0 568.0" stroke="#d2d2d2" stroke-width="4.3" fill="none" stroke-linecap="round" stroke-linejoin="round"/><path d="M595.0 626.0 L639.0 670.0" stroke="#9a9a9a" stroke-width="6.7" fill="none" stroke-linecap="round" stroke-linejoin="round"/><path d="M595.0 626.0 L639.0 670.0" stroke="#d2d2d2" stroke-width="4.3" fill="none" stroke-linecap="round" stroke-linejoin="round"/><path d="M231.0 560.0 L156.0 670.0" stroke="#9a9a9a" stroke-width="6.7" fill="none" stroke-linecap="round" stroke-linejoin="round"/><path d="M231.0 560.0 L156.0 670.0" stroke="#d2d2d2" stroke-width="4.3" fill="none" stroke-linecap="round" stroke-linejoin="round"/><path d="M395.0 604.0 L400.0 670.0" stroke="#9a9a9a" stroke-width="6.7" fill="none" stroke-linecap="round" stroke-linejoin="round"/><path d="M395.0 604.0 L400.0 670.0" stroke="#d2d2d2" stroke-width="4.3" fill="none" stroke-linecap="round" stroke-linejoin="round"/><path d="M524.0 544.0 L544.0 567.0" stroke="#9a9a9a" stroke-width="6.7" fill="none" stroke-linecap="round" stroke-linejoin="round"/><path d="M524.0 544.0 L544.0 567.0" stroke="#d2d2d2" stroke-width="4.3" fill="none" stroke-linecap="round" stroke-linejoin="round"/><path d="M524.0 282.4 L559.3 256.0 L597.4 238.4 L629.8 230.2 L651.8 243.7 L635.6 253.1 L615.1 269.2 L656.2 269.2 L700.3 273.0 L735.5 281.0 L769.3 292.7 L767.8 301.5 L729.6 300.7 L687.0 302.4 L709.1 320.6 L729.6 344.1 L750.2 387.6 L712.0 394.1 L700.3 373.5 L672.4 354.4 L647.4 373.5 L612.1 400.0 L576.9 420.5 L551.9 441.1 L526.9 416.1 L547.5 397.0 L573.9 375.0 L524.0 378.8 Z" transform="translate(1 9)" fill="#9c9c9c" filter="url(#blur2)"/><path d="M524.0 282.4 L559.3 256.0 L597.4 238.4 L629.8 230.2 L651.8 243.7 L635.6 253.1 L615.1 269.2 L656.2 269.2 L700.3 273.0 L735.5 281.0 L769.3 292.7 L767.8 301.5 L729.6 300.7 L687.0 302.4 L709.1 320.6 L729.6 344.1 L750.2 387.6 L712.0 394.1 L700.3 373.5 L672.4 354.4 L647.4 373.5 L612.1 400.0 L576.9 420.5 L551.9 441.1 L526.9 416.1 L547.5 397.0 L573.9 375.0 L524.0 378.8 Z" transform="translate(0 7)" fill="#b2b2b2"/><path d="M524.0 282.4 L559.3 256.0 L597.4 238.4 L629.8 230.2 L651.8 243.7 L635.6 253.1 L615.1 269.2 L656.2 269.2 L700.3 273.0 L735.5 281.0 L769.3 292.7 L767.8 301.5 L729.6 300.7 L687.0 302.4 L709.1 320.6 L729.6 344.1 L750.2 387.6 L712.0 394.1 L700.3 373.5 L672.4 354.4 L647.4 373.5 L612.1 400.0 L576.9 420.5 L551.9 441.1 L526.9 416.1 L547.5 397.0 L573.9 375.0 L524.0 378.8 Z" transform="translate(0 3.5)" fill="#b9b9b9"/><path d="M524.0 282.4 L559.3 256.0 L597.4 238.4 L629.8 230.2 L651.8 243.7 L635.6 253.1 L615.1 269.2 L656.2 269.2 L700.3 273.0 L735.5 281.0 L769.3 292.7 L767.8 301.5 L729.6 300.7 L687.0 302.4 L709.1 320.6 L729.6 344.1 L750.2 387.6 L712.0 394.1 L700.3 373.5 L672.4 354.4 L647.4 373.5 L612.1 400.0 L576.9 420.5 L551.9 441.1 L526.9 416.1 L547.5 397.0 L573.9 375.0 L524.0 378.8 Z" fill="#d3d3d3"/><ellipse cx="596.0" cy="319.2" rx="51" ry="27" fill="#8e8e8e"/><ellipse cx="599.0" cy="325.2" rx="46" ry="20" fill="#a8a8a8"/><ellipse cx="627.2" cy="193.3" rx="28.1" ry="14.0" fill="#707070" opacity="0.22" filter="url(#blur)"/><ellipse cx="604.1" cy="169.7" rx="25.5" ry="28.1" fill="url(#ring)" stroke="#8c8c8c" stroke-width="1.3"/><ellipse cx="609.3" cy="172.6" rx="25.5" ry="28.1" fill="url(#ring)" stroke="#8c8c8c" stroke-width="1.3"/><ellipse cx="614.5" cy="175.5" rx="25.5" ry="28.1" fill="url(#ring)" stroke="#8c8c8c" stroke-width="1.3"/><ellipse cx="615.5" cy="176.3" rx="21.4" ry="23.6" fill="url(#sph)" stroke="#6a6a6a" stroke-width="1.2"/><ellipse cx="744.0" cy="206.1" rx="30.8" ry="15.4" fill="#707070" opacity="0.22" filter="url(#blur)"/><ellipse cx="721.0" cy="180.5" rx="28.0" ry="29.4" fill="url(#ring)" stroke="#8c8c8c" stroke-width="1.3"/><ellipse cx="725.5" cy="183.5" rx="28.0" ry="29.4" fill="url(#ring)" stroke="#8c8c8c" stroke-width="1.3"/><ellipse cx="730.0" cy="186.5" rx="28.0" ry="29.4" fill="url(#ring)" stroke="#8c8c8c" stroke-width="1.3"/><ellipse cx="731.1" cy="187.3" rx="23.5" ry="24.7" fill="url(#sph)" stroke="#6a6a6a" stroke-width="1.2"/><ellipse cx="851.0" cy="238.0" rx="33.0" ry="16.5" fill="#707070" opacity="0.22" filter="url(#blur)"/><ellipse cx="826.0" cy="210.0" rx="30.0" ry="31.5" fill="url(#ring)" stroke="#8c8c8c" stroke-width="1.3"/><ellipse cx="831.0" cy="213.5" rx="30.0" ry="31.5" fill="url(#ring)" stroke="#8c8c8c" stroke-width="1.3"/><ellipse cx="836.0" cy="217.0" rx="30.0" ry="31.5" fill="url(#ring)" stroke="#8c8c8c" stroke-width="1.3"/><ellipse cx="837.2" cy="217.9" rx="25.2" ry="26.5" fill="url(#sph)" stroke="#6a6a6a" stroke-width="1.2"/><ellipse cx="605.1" cy="639.7" rx="45.1" ry="22.6" fill="#707070" opacity="0.22" filter="url(#blur)"/><ellipse cx="565.2" cy="591.0" rx="41.0" ry="41.0" fill="url(#ring)" stroke="#8c8c8c" stroke-width="1.3"/><ellipse cx="574.9" cy="601.0" rx="41.0" ry="41.0" fill="url(#ring)" stroke="#8c8c8c" stroke-width="1.3"/><ellipse cx="584.6" cy="611.0" rx="41.0" ry="41.0" fill="url(#ring)" stroke="#8c8c8c" stroke-width="1.3"/><ellipse cx="586.2" cy="612.2" rx="34.4" ry="34.4" fill="url(#sph)" stroke="#6a6a6a" stroke-width="1.2"/><ellipse cx="787.0" cy="606.8" rx="35.8" ry="17.9" fill="#707070" opacity="0.22" filter="url(#blur)"/><ellipse cx="750.8" cy="572.0" rx="32.5" ry="43.9" fill="url(#ring)" stroke="#8c8c8c" stroke-width="1.3"/><ellipse cx="760.8" cy="578.0" rx="32.5" ry="43.9" fill="url(#ring)" stroke="#8c8c8c" stroke-width="1.3"/><ellipse cx="770.8" cy="584.0" rx="32.5" ry="43.9" fill="url(#ring)" stroke="#8c8c8c" stroke-width="1.3"/><ellipse cx="772.1" cy="585.0" rx="27.3" ry="36.9" fill="url(#sph)" stroke="#6a6a6a" stroke-width="1.2"/><ellipse cx="420.5" cy="605.5" rx="49.5" ry="24.8" fill="#707070" opacity="0.22" filter="url(#blur)"/><ellipse cx="390.0" cy="570.0" rx="45.0" ry="38.2" fill="url(#ring)" stroke="#8c8c8c" stroke-width="1.3"/><ellipse cx="394.0" cy="572.0" rx="45.0" ry="38.2" fill="url(#ring)" stroke="#8c8c8c" stroke-width="1.3"/><ellipse cx="398.0" cy="574.0" rx="45.0" ry="38.2" fill="url(#ring)" stroke="#8c8c8c" stroke-width="1.3"/><ellipse cx="399.8" cy="575.4" rx="37.8" ry="32.1" fill="url(#sph)" stroke="#6a6a6a" stroke-width="1.2"/><path d="M616.0 177.0 L734.0 249.0 L762.0 269.0" stroke="#9a9a9a" stroke-width="6.7" fill="none" stroke-linecap="round" stroke-linejoin="round"/><path d="M616.0 177.0 L734.0 249.0 L762.0 269.0" stroke="#d2d2d2" stroke-width="4.3" fill="none" stroke-linecap="round" stroke-linejoin="round"/><path d="M732.0 189.0 L770.0 249.0 L803.0 307.0" stroke="#9a9a9a" stroke-width="6.7" fill="none" stroke-linecap="round" stroke-linejoin="round"/><path d="M732.0 189.0 L770.0 249.0 L803.0 307.0" stroke="#d2d2d2" stroke-width="4.3" fill="none" stroke-linecap="round" stroke-linejoin="round"/><path d="M836.0 221.0 L824.0 289.0 L818.0 353.0" stroke="#9a9a9a" stroke-width="6.7" fill="none" stroke-linecap="round" stroke-linejoin="round"/><path d="M836.0 221.0 L824.0 289.0 L818.0 353.0" stroke="#d2d2d2" stroke-width="4.3" fill="none" stroke-linecap="round" stroke-linejoin="round"/><path d="M589.0 615.0 L639.0 670.0" stroke="#9a9a9a" stroke-width="6.7" fill="none" stroke-linecap="round" stroke-linejoin="round"/><path d="M589.0 615.0 L639.0 670.0" stroke="#d2d2d2" stroke-width="4.3" fill="none" stroke-linecap="round" stroke-linejoin="round"/><path d="M774.0 589.0 L836.0 615.0" stroke="#9a9a9a" stroke-width="6.7" fill="none" stroke-linecap="round" stroke-linejoin="round"/><path d="M774.0 589.0 L836.0 615.0" stroke="#d2d2d2" stroke-width="4.3" fill="none" stroke-linecap="round" stroke-linejoin="round"/><path d="M398.0 579.0 L400.0 670.0" stroke="#9a9a9a" stroke-width="6.7" fill="none" stroke-linecap="round" stroke-linejoin="round"/><path d="M398.0 579.0 L400.0 670.0" stroke="#d2d2d2" stroke-width="4.3" fill="none" stroke-linecap="round" stroke-linejoin="round"/><path d="M644.0 79.0 L663.0 60.0 L689.0 86.0 L669.0 106.0 Z" fill="#c2c2c2" stroke="#a8a8a8" stroke-width="1"/><path d="M644.0 79.0 L669.0 106.0 L669.0 111.0 L646.0 85.0 Z" fill="#a0a0a0"/><path d="M826.0 91.0 L836.0 85.0 L836.0 119.0 Z" fill="#c2c2c2"/><g transform="translate(553 232) rotate(3)"><rect x="-12" y="-10" width="6" height="19" rx="1" fill="#4654aa" stroke="#2a3378" stroke-width="1"/><rect x="-6" y="-8" width="6" height="19" rx="1" fill="#4654aa" stroke="#2a3378" stroke-width="1"/><rect x="0" y="-10" width="6" height="19" rx="1" fill="#4654aa" stroke="#2a3378" stroke-width="1"/><rect x="6" y="-8" width="6" height="19" rx="1" fill="#4654aa" stroke="#2a3378" stroke-width="1"/></g><g transform="translate(630 226) rotate(5)"><rect x="-12" y="-10" width="6" height="19" rx="1" fill="#4654aa" stroke="#2a3378" stroke-width="1"/><rect x="-6" y="-8" width="6" height="19" rx="1" fill="#4654aa" stroke="#2a3378" stroke-width="1"/><rect x="0" y="-10" width="6" height="19" rx="1" fill="#4654aa" stroke="#2a3378" stroke-width="1"/><rect x="6" y="-8" width="6" height="19" rx="1" fill="#4654aa" stroke="#2a3378" stroke-width="1"/></g><g transform="translate(702 244) rotate(22)"><rect x="-12" y="-10" width="6" height="19" rx="1" fill="#4654aa" stroke="#2a3378" stroke-width="1"/><rect x="-6" y="-8" width="6" height="19" rx="1" fill="#4654aa" stroke="#2a3378" stroke-width="1"/><rect x="0" y="-10" width="6" height="19" rx="1" fill="#4654aa" stroke="#2a3378" stroke-width="1"/><rect x="6" y="-8" width="6" height="19" rx="1" fill="#4654aa" stroke="#2a3378" stroke-width="1"/></g><g transform="translate(762 269) rotate(30)"><rect x="-12" y="-10" width="6" height="19" rx="1" fill="#4654aa" stroke="#2a3378" stroke-width="1"/><rect x="-6" y="-8" width="6" height="19" rx="1" fill="#4654aa" stroke="#2a3378" stroke-width="1"/><rect x="0" y="-10" width="6" height="19" rx="1" fill="#4654aa" stroke="#2a3378" stroke-width="1"/><rect x="6" y="-8" width="6" height="19" rx="1" fill="#4654aa" stroke="#2a3378" stroke-width="1"/></g><g transform="translate(803 307) rotate(40)"><rect x="-12" y="-10" width="6" height="19" rx="1" fill="#4654aa" stroke="#2a3378" stroke-width="1"/><rect x="-6" y="-8" width="6" height="19" rx="1" fill="#4654aa" stroke="#2a3378" stroke-width="1"/><rect x="0" y="-10" width="6" height="19" rx="1" fill="#4654aa" stroke="#2a3378" stroke-width="1"/><rect x="6" y="-8" width="6" height="19" rx="1" fill="#4654aa" stroke="#2a3378" stroke-width="1"/></g><g transform="translate(818 353) rotate(80)"><rect x="-12" y="-10" width="6" height="19" rx="1" fill="#4654aa" stroke="#2a3378" stroke-width="1"/><rect x="-6" y="-8" width="6" height="19" rx="1" fill="#4654aa" stroke="#2a3378" stroke-width="1"/><rect x="0" y="-10" width="6" height="19" rx="1" fill="#4654aa" stroke="#2a3378" stroke-width="1"/><rect x="6" y="-8" width="6" height="19" rx="1" fill="#4654aa" stroke="#2a3378" stroke-width="1"/></g><g transform="translate(797 400) rotate(-30)"><rect x="-12" y="-10" width="6" height="19" rx="1" fill="#4654aa" stroke="#2a3378" stroke-width="1"/><rect x="-6" y="-8" width="6" height="19" rx="1" fill="#4654aa" stroke="#2a3378" stroke-width="1"/><rect x="0" y="-10" width="6" height="19" rx="1" fill="#4654aa" stroke="#2a3378" stroke-width="1"/><rect x="6" y="-8" width="6" height="19" rx="1" fill="#4654aa" stroke="#2a3378" stroke-width="1"/></g><g transform="translate(740 441) rotate(-20)"><rect x="-12" y="-10" width="6" height="19" rx="1" fill="#4654aa" stroke="#2a3378" stroke-width="1"/><rect x="-6" y="-8" width="6" height="19" rx="1" fill="#4654aa" stroke="#2a3378" stroke-width="1"/><rect x="0" y="-10" width="6" height="19" rx="1" fill="#4654aa" stroke="#2a3378" stroke-width="1"/><rect x="6" y="-8" width="6" height="19" rx="1" fill="#4654aa" stroke="#2a3378" stroke-width="1"/></g><g transform="translate(652 467) rotate(5)"><rect x="-12" y="-10" width="6" height="19" rx="1" fill="#4654aa" stroke="#2a3378" stroke-width="1"/><rect x="-6" y="-8" width="6" height="19" rx="1" fill="#4654aa" stroke="#2a3378" stroke-width="1"/><rect x="0" y="-10" width="6" height="19" rx="1" fill="#4654aa" stroke="#2a3378" stroke-width="1"/><rect x="6" y="-8" width="6" height="19" rx="1" fill="#4654aa" stroke="#2a3378" stroke-width="1"/></g><g transform="translate(552 471) rotate(8)"><rect x="-12" y="-10" width="6" height="19" rx="1" fill="#4654aa" stroke="#2a3378" stroke-width="1"/><rect x="-6" y="-8" width="6" height="19" rx="1" fill="#4654aa" stroke="#2a3378" stroke-width="1"/><rect x="0" y="-10" width="6" height="19" rx="1" fill="#4654aa" stroke="#2a3378" stroke-width="1"/><rect x="6" y="-8" width="6" height="19" rx="1" fill="#4654aa" stroke="#2a3378" stroke-width="1"/></g></svg>
<div class="b" style="left:29px;top:141px;width:1112px;height:768px;background:#2a2a2a;box-sizing:border-box;border:1px solid #505050;border-top:none"></div><div class="b" style="left:29px;top:141px;width:1112px;height:45px;background:#4a4846;border-top:1px solid #5e5c5a;box-sizing:border-box"></div><svg style="left:41px;top:151px" width="26" height="26">
<defs><linearGradient id="lgr" x1="0" y1="0" x2="0.3" y2="1"><stop offset="0" stop-color="#ffffff"/><stop offset="0.6" stop-color="#e0e0e8"/><stop offset="1" stop-color="#a8a8c0"/></linearGradient>
<radialGradient id="lg1" cx="0.45" cy="0.6" r="0.6"><stop offset="0" stop-color="#7a8af0"/><stop offset="0.35" stop-color="#2a3aa8"/><stop offset="0.75" stop-color="#0c1260"/><stop offset="1" stop-color="#3840b8"/></radialGradient></defs>
<circle cx="12" cy="11.8" r="11" fill="url(#lgr)"/>
<path d="M21 6 Q14 4 8 8 Q3 13 6 19 Q11 23 17 20 Q20 15 21 6 Z" fill="url(#lg1)"/>
<ellipse cx="11.5" cy="13.5" rx="4" ry="3.5" fill="#5a6ad8" opacity="0.8"/>
</svg><div class="t" style="left:70px;top:156px;font-size:18px;color:#f2f2f2;letter-spacing:0">Attributes (2)</div><svg style="left:950px;top:150px" width="170" height="30">
<path d="M8 13.5 H23" stroke="#fff" stroke-width="1.3"/>
<rect x="77.5" y="6.5" width="14" height="14" stroke="#fff" stroke-width="1.3" fill="none"/>
<path d="M148 6 L163 21 M163 6 L148 21" stroke="#fff" stroke-width="1.3"/>
</svg><div class="b" style="left:30px;top:219px;width:1110px;height:1px;background:#202020;"></div><svg style="left:38px;top:194px" width="24" height="18"><path d="M0 2 H22 M0 8.5 H22 M0 15 H22" stroke="#f0f0f0" stroke-width="3"/></svg><div class="t" style="left:75px;top:194px;font-size:17px;color:#b0b0b0;">Mode</div><div class="t" style="left:140px;top:194px;font-size:17px;color:#b0b0b0;">Edit</div><div class="t" style="left:190px;top:194px;font-size:17px;color:#b0b0b0;">User Data</div><svg style="left:900px;top:188px" width="240" height="30">
<path d="M8 14 H27 M8 14 L16 6 M8 14 L16 22" stroke="#555" stroke-width="2" fill="none"/>
<path d="M36 14 H55 M55 14 L47 6 M55 14 L47 22" stroke="#555" stroke-width="2" fill="none"/>
<path d="M76 5 V25 M76 5 L68 13 M76 5 L84 13" stroke="#555" stroke-width="2" fill="none"/>
<circle cx="104" cy="12" r="6.5" stroke="#9a9a9a" stroke-width="2.2" fill="none"/><path d="M109 17 L116 24" stroke="#9a9a9a" stroke-width="2.5"/>
<path d="M125 7 H147 M129 13 H143 M133 19 H139" stroke="#9a9a9a" stroke-width="2.5"/>
<path d="M161 14 V10 A5.5 5.5 0 0 1 172 10 V14" stroke="#fff" stroke-width="2.5" fill="none"/><rect x="157" y="13" width="19" height="12" rx="2" fill="#fff"/>
<circle cx="196.5" cy="14.5" r="11.5" stroke="#9a9a9a" stroke-width="2" fill="none"/><circle cx="196.5" cy="14.5" r="4" stroke="#9a9a9a" stroke-width="2" fill="none"/>
<path d="M224 6 H217 V25 H236 V18" stroke="#9a9a9a" stroke-width="2" fill="none"/><path d="M225 17 L236 5 M228 5 H237 V14" stroke="#9a9a9a" stroke-width="2" fill="none"/>
</svg><div class="b" style="left:39px;top:225px;width:33px;height:33px;background:conic-gradient(#c8c8c8 25%,#6a6a6a 0 50%,#c8c8c8 0 75%,#6a6a6a 0) 0 0/16px 16px;"></div><div class="b" style="left:41px;top:226px;width:31px;height:31px;border-radius:50%;background:radial-gradient(circle at 35% 30%,#dfe3f5 0,#98a0d0 18%,#7880b0 70%,#5a6090 100%)"></div><div class="t" style="left:78px;top:233px;font-size:16px;color:#b4b4b4;letter-spacing:-0.1px">StandardSurface [Inner.Cubes.Standard]</div><div class="b" style="left:980px;top:228px;width:152px;height:27px;background:#5a5a5a;border-radius:14px 10px 10px 14px"></div><div class="b" style="left:1101px;top:228px;width:1px;height:27px;background:#3c3c3c;"></div><div class="t" style="left:991px;top:233px;font-size:17px;color:#c8c8c8;">Custom</div><svg style="left:1108px;top:236px" width="16" height="10"><path d="M1 1 H13 L7 8 Z" fill="#c0c0c0"/></svg><div class="b" style="left:42px;top:264px;width:64px;height:28px;background:#3a3a3a;border-radius:6px;"></div><div class="t" style="left:42px;top:270px;width:64px;text-align:center;font-size:17px;color:#b8b8b8">Basic</div><div class="b" style="left:113px;top:264px;width:100px;height:28px;background:#5558a0;border-radius:6px;"></div><div class="t" style="left:113px;top:270px;width:100px;text-align:center;font-size:17px;color:#f4f4f4">Base layer</div><div class="b" style="left:219px;top:264px;width:129px;height:28px;background:#3a3a3a;border-radius:6px;"></div><div class="t" style="left:219px;top:270px;width:129px;text-align:center;font-size:17px;color:#b8b8b8">Specular layer</div><div class="b" style="left:354px;top:264px;width:160px;height:28px;background:#3a3a3a;border-radius:6px;"></div><div class="t" style="left:354px;top:270px;width:160px;text-align:center;font-size:17px;color:#b8b8b8">Transmission layer</div><div class="b" style="left:521px;top:264px;width:107px;height:28px;background:#3a3a3a;border-radius:6px;"></div><div class="t" style="left:521px;top:270px;width:107px;text-align:center;font-size:17px;color:#b8b8b8">Subsurface</div><div class="b" style="left:635px;top:264px;width:124px;height:28px;background:#3a3a3a;border-radius:6px;"></div><div class="t" style="left:635px;top:270px;width:124px;text-align:center;font-size:17px;color:#b8b8b8">Coating layer</div><div class="b" style="left:765px;top:264px;width:111px;height:28px;background:#3a3a3a;border-radius:6px;"></div><div class="t" style="left:765px;top:270px;width:111px;text-align:center;font-size:17px;color:#b8b8b8">Sheen layer</div><div class="b" style="left:882px;top:264px;width:91px;height:28px;background:#3a3a3a;border-radius:6px;"></div><div class="t" style="left:882px;top:270px;width:91px;text-align:center;font-size:17px;color:#b8b8b8">Emission</div><div class="b" style="left:980px;top:264px;width:130px;height:28px;background:#3a3a3a;border-radius:6px;"></div><div class="t" style="left:980px;top:270px;width:130px;text-align:center;font-size:17px;color:#b8b8b8">Thin film layer</div><div class="b" style="left:42px;top:299px;width:181px;height:28px;background:#3a3a3a;border-radius:6px;"></div><div class="t" style="left:42px;top:305px;width:181px;text-align:center;font-size:17px;color:#b8b8b8">Geometric properties</div><div class="b" style="left:230px;top:299px;width:125px;height:28px;background:#3a3a3a;border-radius:6px;"></div><div class="t" style="left:230px;top:305px;width:125px;text-align:center;font-size:17px;color:#b8b8b8">Material layer</div><div class="b" style="left:362px;top:299px;width:94px;height:28px;background:#3a3a3a;border-radius:6px;"></div><div class="t" style="left:362px;top:305px;width:94px;text-align:center;font-size:17px;color:#b8b8b8">Common</div><div class="b" style="left:462px;top:299px;width:70px;height:28px;background:#3a3a3a;border-radius:6px;"></div><div class="t" style="left:462px;top:305px;width:70px;text-align:center;font-size:17px;color:#b8b8b8">Editor</div><div class="b" style="left:539px;top:299px;width:74px;height:28px;background:#3a3a3a;border-radius:6px;"></div><div class="t" style="left:539px;top:305px;width:74px;text-align:center;font-size:17px;color:#b8b8b8">Assign</div><svg style="left:38px;top:340px" width="16" height="12"><path d="M2 3 L8 9 L14 3" stroke="#d0d0d0" stroke-width="1.8" fill="none"/></svg><svg style="left:55px;top:334px" width="180" height="180">
<defs>
<radialGradient id="sp1" cx="0.35" cy="0.32" r="0.8"><stop offset="0" stop-color="#9aa2d2"/><stop offset="0.4" stop-color="#8a92c4"/><stop offset="0.8" stop-color="#7b83b4"/><stop offset="1" stop-color="#60679a"/></radialGradient>
<radialGradient id="hl" cx="0.5" cy="0.5" r="0.5"><stop offset="0" stop-color="#fff"/><stop offset="0.22" stop-color="#fff" stop-opacity="0.95"/><stop offset="0.5" stop-color="#e8ecff" stop-opacity="0.35"/><stop offset="1" stop-color="#fff" stop-opacity="0"/></radialGradient>
<radialGradient id="shd" cx="0.5" cy="0.5" r="0.5"><stop offset="0" stop-color="#111" stop-opacity="0.85"/><stop offset="1" stop-color="#111" stop-opacity="0"/></radialGradient>
</defs>
<rect width="180" height="180" fill="#d8d8d8"/>
<rect x="0" y="0" width="44" height="44" fill="#7a7a7a"/><rect x="91" y="0" width="46" height="44" fill="#7a7a7a"/>
<rect x="44" y="44" width="47" height="44" fill="#7a7a7a"/><rect x="137" y="44" width="43" height="44" fill="#7a7a7a"/>
<rect x="0" y="88" width="44" height="46" fill="#7a7a7a"/><rect x="91" y="88" width="46" height="46" fill="#7a7a7a"/>
<path d="M44 134 L91 134 L88 165 L40 165 Z" fill="#7a7a7a"/><path d="M137 134 L180 134 L180 165 L134 165 Z" fill="#7a7a7a"/>
<path d="M0 165 L40 165 L36 180 L0 180 Z" fill="#7a7a7a"/><path d="M88 165 L134 165 L131 180 L85 180 Z" fill="#7a7a7a"/>
<ellipse cx="125" cy="150" rx="70" ry="30" fill="url(#shd)"/>
<circle cx="90" cy="90" r="83" fill="url(#sp1)"/>
<circle cx="60" cy="59" r="13" fill="url(#hl)"/>
<rect x="0.5" y="0.5" width="179" height="179" fill="none" stroke="#1a1a1a" stroke-width="1"/>
</svg><div class="t" style="left:42px;top:527px;font-size:17px;color:#f4f4f4;">Base layer</div><div class="b" style="left:40px;top:558px;width:25px;height:25px;border-radius:50%;background:#272727"></div><svg style="left:44px;top:561px" width="18" height="18"><path d="M9 2.5 L15.5 9 L9 15.5 L2.5 9 Z" stroke="#b0b0b0" stroke-width="1.7" fill="none"/></svg><div class="t" style="left:75px;top:561.5px;font-size:17px;color:#a8a8a8;">Weight</div><div class="b" style="left:40px;top:589.5px;width:25px;height:25px;border-radius:50%;background:#272727"></div><svg style="left:44px;top:592.5px" width="18" height="18"><path d="M9 2.5 L15.5 9 L9 15.5 L2.5 9 Z" stroke="#b0b0b0" stroke-width="1.7" fill="none"/></svg><div class="t" style="left:75px;top:593.0px;font-size:17px;color:#a8a8a8;">Color</div><div class="b" style="left:40px;top:733.5px;width:25px;height:25px;border-radius:50%;background:#272727"></div><svg style="left:44px;top:736.5px" width="18" height="18"><path d="M9 2.5 L15.5 9 L9 15.5 L2.5 9 Z" stroke="#b0b0b0" stroke-width="1.7" fill="none"/></svg><div class="t" style="left:75px;top:737.0px;font-size:17px;color:#a8a8a8;">Diffuse roughness</div><div class="b" style="left:40px;top:766px;width:25px;height:25px;border-radius:50%;background:#272727"></div><svg style="left:44px;top:769px" width="18" height="18"><path d="M9 2.5 L15.5 9 L9 15.5 L2.5 9 Z" stroke="#b0b0b0" stroke-width="1.7" fill="none"/></svg><div class="t" style="left:75px;top:769.5px;font-size:17px;color:#a8a8a8;">Metal</div><div class="b" style="left:215px;top:556px;width:101px;height:26px;background:#1d1d1d;border-radius:5px"></div><div class="t" style="left:215px;top:562.3px;width:101px;text-align:center;font-size:16px;color:#d2d2d2">0.8</div><div class="b" style="left:324px;top:565px;width:805px;height:8px;background:#1d1d1d;"></div><div class="b" style="left:324px;top:565px;width:638px;height:8px;background:#575c9c;"></div><div class="b" style="left:961px;top:556px;width:5px;height:26px;background:#a9a9a9;"></div><svg style="left:210px;top:598px" width="14" height="10"><path d="M1 1 H12 L6.5 7 Z" fill="#888"/></svg><div class="b" style="left:229px;top:588px;width:88px;height:24px;background:#6aa2e0;"></div><svg style="left:328px;top:586px" width="26" height="28"><path d="M4 24 L4 20 L17 7 L21 11 L8 24 Z" stroke="#8a8a8a" stroke-width="2" fill="none"/><path d="M16 6 L20 2 Q23 1 25 4 L24 7 L21 10" fill="#8a8a8a"/></svg><div class="b" style="left:1101px;top:588px;width:27px;height:27px;border-radius:50%;background:#393939"></div><svg style="left:1106px;top:596px" width="18" height="12"><path d="M2 1 H15 L8.5 8 Z" fill="#c8c8c8"/></svg><div class="t" style="left:212px;top:629px;font-size:16px;color:#a0a0a0;">R</div><div class="b" style="left:238px;top:624px;width:102px;height:27px;background:#1d1d1d;border-radius:5px"></div><div class="t" style="left:238px;top:630.8px;width:102px;text-align:center;font-size:16px;color:#d2d2d2">0.325736</div><div class="b" style="left:350px;top:628px;width:774px;height:19px;background:linear-gradient(90deg,rgb(0,0,0) 0%,rgb(89,0,0) 10%,rgb(124,0,0) 20%,rgb(149,0,0) 30%,rgb(170,0,0) 40%,rgb(188,0,0) 50%,rgb(203,0,0) 60%,rgb(218,0,0) 70%,rgb(231,0,0) 80%,rgb(243,0,0) 90%,rgb(255,0,0) 100%);"></div><div class="b" style="left:348px;top:628px;width:2px;height:19px;background:#1a1a1a;"></div><div class="b" style="left:601px;top:626px;width:5px;height:23px;background:#f2a900;"></div><div class="t" style="left:212px;top:666px;font-size:16px;color:#a0a0a0;">G</div><div class="b" style="left:238px;top:661px;width:102px;height:27px;background:#1d1d1d;border-radius:5px"></div><div class="t" style="left:238px;top:667.8px;width:102px;text-align:center;font-size:16px;color:#d2d2d2">0.371818</div><div class="b" style="left:350px;top:666px;width:774px;height:19px;background:linear-gradient(90deg,rgb(0,0,0) 0%,rgb(0,89,0) 10%,rgb(0,124,0) 20%,rgb(0,149,0) 30%,rgb(0,170,0) 40%,rgb(0,188,0) 50%,rgb(0,203,0) 60%,rgb(0,218,0) 70%,rgb(0,231,0) 80%,rgb(0,243,0) 90%,rgb(0,255,0) 100%);"></div><div class="b" style="left:348px;top:666px;width:2px;height:19px;background:#1a1a1a;"></div><div class="b" style="left:637px;top:664px;width:5px;height:23px;background:#f2a900;"></div><div class="t" style="left:212px;top:704px;font-size:16px;color:#a0a0a0;">B</div><div class="b" style="left:238px;top:699px;width:102px;height:27px;background:#1d1d1d;border-radius:5px"></div><div class="t" style="left:238px;top:705.8px;width:102px;text-align:center;font-size:16px;color:#d2d2d2">0.678176</div><div class="b" style="left:350px;top:703px;width:774px;height:19px;background:linear-gradient(90deg,rgb(0,0,0) 0%,rgb(0,0,89) 10%,rgb(0,0,124) 20%,rgb(0,0,149) 30%,rgb(0,0,170) 40%,rgb(0,0,188) 50%,rgb(0,0,203) 60%,rgb(0,0,218) 70%,rgb(0,0,231) 80%,rgb(0,0,243) 90%,rgb(0,0,255) 100%);"></div><div class="b" style="left:348px;top:703px;width:2px;height:19px;background:#1a1a1a;"></div><div class="b" style="left:872px;top:701px;width:5px;height:23px;background:#f2a900;"></div><div class="b" style="left:215px;top:732px;width:101px;height:26px;background:#1d1d1d;border-radius:5px"></div><div class="t" style="left:215px;top:738.3px;width:101px;text-align:center;font-size:16px;color:#d2d2d2">0.16</div><div class="b" style="left:324px;top:741px;width:805px;height:8px;background:#1d1d1d;"></div><div class="b" style="left:324px;top:741px;width:128px;height:8px;background:#575c9c;"></div><div class="b" style="left:451px;top:732px;width:5px;height:26px;background:#a9a9a9;"></div><div class="b" style="left:324px;top:774px;width:805px;height:8px;background:#1d1d1d;"></div>
<div class="b" style="left:196px;top:581px;width:161px;height:185px;box-sizing:border-box;border:6.5px solid #0a86d0;border-bottom:none"></div>
<div class="b" style="left:118px;top:764px;width:301px;height:103px;background:#0085cc;"></div>
<div class="t" style="left:118px;top:775px;width:301px;text-align:center;font-size:36px;font-weight:bold;color:#fff;transform:scaleX(0.81);letter-spacing:2px;-webkit-text-stroke:0.6px #fff">CHANGE TO</div>
<div class="t" style="left:118px;top:819px;width:301px;text-align:center;font-size:36px;font-weight:bold;color:#fff;transform:scaleX(0.84);letter-spacing:2px;-webkit-text-stroke:0.6px #fff">THESE VALUES</div>
</body></html>
